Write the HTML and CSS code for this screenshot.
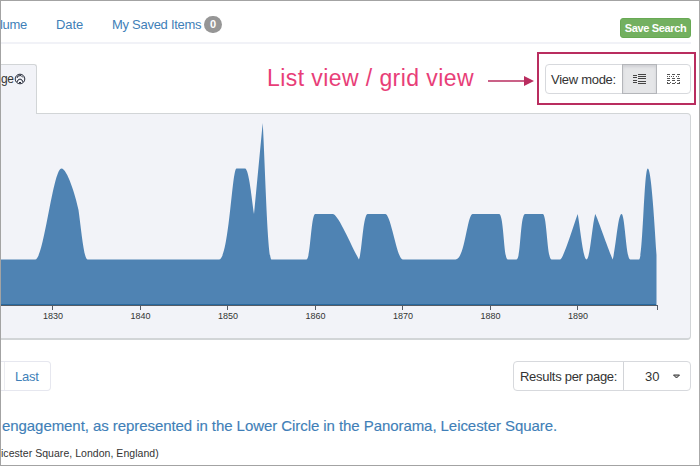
FILE: index.html
```html
<!DOCTYPE html>
<html lang="en">
<head>
<meta charset="utf-8">
<title>Search results</title>
<link rel="stylesheet" href="styles.css">
</head>
<body>
<main class="page">
  <header class="nav">
    <nav class="links"><a class="volume">lume</a><a class="date">Date</a><a class="saved">My Saved Items</a><span class="badge">0</span></nav>
    <button class="save">Save Search</button>
  </header>
  <section class="toolbar">
    <div class="tab"><span>ge</span>
      <svg class="globe" width="12" height="12" viewBox="0 0 12 12" fill="none" stroke="#252a38"><circle cx="6" cy="6" r="4.8" stroke-width="1"/><path d="M3 5l1-2 3-.500 2 2M3 9l1-2 2-1 2 1 1 2M5 9.500h2" stroke-width="1"/></svg>
    </div>
    <div class="callout"><span>List view / grid view</span>
      <svg width="48" height="12" viewBox="0 0 48 12"><path d="M0 6h38" stroke="#b92d5f" stroke-width="1.7"/><path d="M36 1l10 5-10 5z" fill="#b92d5f"/></svg>
    </div>
    <div class="group view">
      <span class="label"><span>View mode:</span></span>
      <button class="mode active" aria-label="List view"><svg width="13" height="11" viewBox="0 0 13 11" stroke="#444" stroke-width="1"><path d="M0 1.5h4M0 3.5h4M0 6.5h4M0 8.5h4M5 .5h8M5 2.5h8M5 4.5h8M5 7.5h8M5 9.5h8"/></svg></button>
      <button class="mode" aria-label="Grid view"><svg width="13" height="11" viewBox="0 0 13 11" stroke="#555" stroke-width="1" fill="none"><path d="M0 .5h3M5 .5h3M10 .5h3M0 4.5h3M5 4.5h3M10 4.5h3M0 6.5h3M5 6.5h3M10 6.5h3M0 9.5h3M5 9.5h3M10 9.5h3"/><path d="M0 2.5h4M4 2.5h4M9 2.5h4M0 8.5h1M3 8.5h2M8 8.5h2M12 8.5h1" stroke-dasharray="1 1"/></svg></button>
      <div class="highlight"></div>
    </div>
  </section>
  <section class="chart">
    <svg width="689" height="224" viewBox="1 114 689 224">
      <path fill="#4f83b3" d="M0 305V259.5H35.2C44 259.5 53 168.5 61.5 168.5C67 168.5 75.500 195 78.500 210C81.500 232 84 259.500 87.500 259.500H219C229 259.500 232 168.500 236.500 168.500H245C249 168.500 252 201 254 214L262.700 123C265 160 267.500 259.500 271.500 259.500H306.500C310.500 259.500 311 214 315.300 214H332.700C338 214 350 243 358.900 259.500C362 253 363 214 367.700 214H385.200C391 214 397 259.500 402.700 259.500H455.500C465 259.500 467 214 472.800 214H499C504 214 503.500 259.500 507.700 259.500H516.500C521 259.500 520 214 525.200 214H542.700C547 214 547 259.500 551.500 259.500H560.200C563 259.500 572 230 577.700 214C580 226 583 259.500 586.500 259.500C590 259.500 592 226 595.200 214C598 219 607 246 612.700 259.500C616 247 618 214 621.500 214C625 214 626 259.500 630.200 259.500H639C643 259.500 644 168.500 647.800 168.500C651 168.500 654 214 656.500 255V305Z"/>
      <path d="M0 304.500H656" stroke="#28699f" stroke-width="1"/><path d="M0 305.500H657.500M52.500 305V310M140.500 305V310M227.500 305V310M315.500 305V310M402.500 305V310M490.500 305V310M577.500 305V310M657.500 305V310" fill="none" stroke="#555c66" stroke-width="1"/>
      <g class="years"><text x="53" y="319">1830</text><text x="140.500" y="319">1840</text><text x="228" y="319">1850</text><text x="315.500" y="319">1860</text><text x="403" y="319">1870</text><text x="490.500" y="319">1880</text><text x="578" y="319">1890</text></g>
    </svg>
  </section>
  <section class="paging">
    <div class="last"><a>Last</a></div>
    <div class="group results"><span class="label"><span>Results per page:</span></span><button class="count">30<svg width="7" height="5" viewBox="0 0 7 5"><path d="M.5 1h6L3.500 4z" fill="#bbb" stroke="#333"/></svg></button></div>
  </section>
  <article class="result">
    <h2><span>engagement, as represented in the Lower Circle in the Panorama, Leicester Square.</span></h2>
    <p><span>icester Square, London, England)</span></p>
  </article>
</main>
</body>
</html>
```
FILE: styles.css
```css
* { box-sizing: border-box; }
body { margin: 0; font-family: "Liberation Sans", Arial, sans-serif; font-size: 13px; color: #333; }
button { font: inherit; color: inherit; margin: 0; padding: 0; border: 0; background: none; }
.page { width: 700px; height: 466px; border: 1px solid #a3a3a3; border-right-color: #aaa; background: #fff; overflow: hidden; display: flex; flex-direction: column; }
.nav { height: 43px; margin-right: 8px; border-bottom: 2px solid #f1f2f7; display: flex; justify-content: space-between; flex: none; }
.links { display: flex; align-items: center; height: 41px; padding-top: 6px; color: #3f7fb8; white-space: nowrap; letter-spacing: -.28px; }
.volume { width: 55px; margin-left: -1px; }
.date { width: 56px; margin-left: 1px; letter-spacing: -.1px; }
.saved { width: 92px; }
.badge { background: #969696; color: #fff; font-weight: bold; font-size: 11px; border-radius: 9px; width: 18px; height: 17px; line-height: 17px; text-align: center; letter-spacing: 0; }
.save { width: 71px; height: 20px; margin-top: 17px; background: #73b060; border: 1px solid #68a954; border-radius: 3px; color: #fff; font-size: 11px; font-weight: bold; letter-spacing: -.35px; white-space: nowrap; }
.toolbar { height: 69px; display: flex; flex: none; }
.tab { width: 36px; height: 50px; margin-top: 20px; border: 1px solid #d2d5d7; border-width: 1px 1px 0 0; border-radius: 0 3px 0 0; background: #f2f3f8; position: relative; z-index: 1; display: flex; padding-top: 7px; gap: 2px; }
.tab span { width: 11px; font-size: 12px; letter-spacing: -.4px; }
.globe { margin-top: 1px; }
.callout { margin-left: 230px; margin-top: 20px; height: 28px; display: flex; align-items: center; justify-content: space-between; width: 271px; color: #e83e78; font-size: 23px; letter-spacing: .42px; white-space: nowrap; }
.callout svg { margin-top: 5px; margin-right: 2px; }
.group { display: flex; align-items: stretch; border: 1px solid #d7d9dd; border-radius: 4px; height: 30px; position: relative; white-space: nowrap; }
.group .label { display: flex; align-items: center; padding-left: 5px; letter-spacing: -.28px; }
.view { width: 146px; margin-left: 7px; margin-top: 20px; }
.view .label { width: 76px; }
.mode { flex: 1; display: flex; align-items: center; justify-content: center; }
.mode.active { flex: none; width: 35px; margin: -1px 0; background: #e5e6e8; border: 1px solid #b4b6ba; box-shadow: inset 0 2px 3px #cfd0d4; }
.highlight { position: absolute; left: -9px; top: -13px; width: 159px; height: 53px; border: 2px solid #b92d5f; }
.chart { height: 227px; width: 690px; flex: none; border: 1px solid #d2d5d7; border-bottom-width: 2px; border-left: 0; border-radius: 0 4px 4px 0; background: #f2f3f8; }
.chart svg { display: block; }
.years { font-size: 9px; text-anchor: middle; fill: #333; }
.paging { height: 51px; padding-top: 21px; padding-right: 8px; display: flex; justify-content: space-between; flex: none; }
.last { width: 50px; height: 30px; border: 1px solid #e6e7ef; border-left: 0; border-radius: 0 4px 4px 0; display: flex; align-items: center; color: #3f7fb8; letter-spacing: -.2px; }
.last a { height: 28px; line-height: 29px; margin-left: 3px; padding-left: 10px; border-left: 1px solid #ecedf2; }
.results { width: 178px; }
.results .label { width: 109px; padding-left: 6px; }
.count { flex: 1; border-left: 1px solid #d2d4d8; display: flex; align-items: center; padding-left: 21px; gap: 14px; }
.result { white-space: nowrap; }
.result h2 { margin: 26px 0 0 1px; font-size: 15px; line-height: 18px; font-weight: normal; color: #3f7fb8; letter-spacing: -.065px; -webkit-text-stroke: .15px; }
.result p { margin: 11px 0 0 0; font-size: 10.5px; line-height: 14px; letter-spacing: .04px; }
```
